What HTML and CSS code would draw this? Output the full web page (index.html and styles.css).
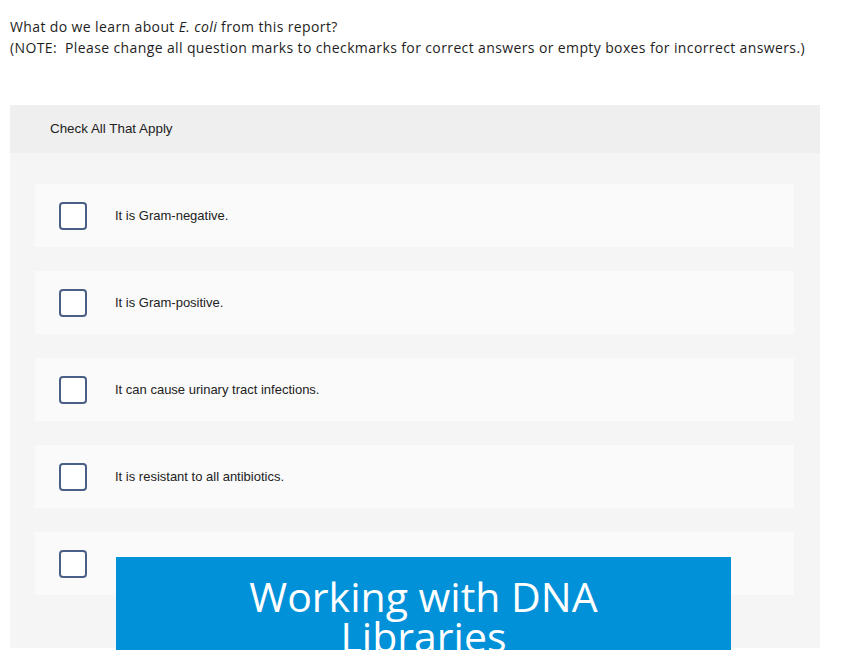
FILE: index.html
```html
<!DOCTYPE html>
<html>
<head>
<meta charset="utf-8">
<link rel="stylesheet" href="styles.css">
</head>
<body>
<div class="prompt">
  <p>What do we learn about <i>E. coli</i> from this report?</p>
  <p>(NOTE:&nbsp; Please change all question marks to checkmarks for correct answers or empty boxes for incorrect answers.)</p>
</div>
<div class="panel">
  <div class="panel-head">Check All That Apply</div>
  <div class="panel-body">
    <div class="option"><span class="box"></span><span class="label">It is Gram-negative.</span></div>
    <div class="option"><span class="box"></span><span class="label">It is Gram-positive.</span></div>
    <div class="option"><span class="box"></span><span class="label">It can cause urinary tract infections.</span></div>
    <div class="option"><span class="box"></span><span class="label">It is resistant to all antibiotics.</span></div>
    <div class="option"><span class="box"></span><span class="label"></span></div>
  </div>
</div>
<div class="banner">Working with DNA<br>Libraries</div>
</body>
</html>
```
FILE: styles.css
```css
html, body {
  margin: 0;
  padding: 0;
  background: #ffffff;
  overflow: hidden;
  height: 660px;
}
body {
  font-family: "Liberation Sans", Arial, sans-serif;
  color: #222;
  position: relative;
}
.prompt {
  padding: 16px 10px 0 10px;
  font-family: "Open Sans", "Liberation Sans", sans-serif;
  font-size: 14px;
  line-height: 21px;
  letter-spacing: 0.38px;
  color: #1e1e1e;
}
.prompt p {
  margin: 0;
  white-space: nowrap;
}
.panel {
  margin: 47px 27px 0 10px;
  background: #f5f5f5;
}
.panel-head {
  background: #efefef;
  height: 48px;
  line-height: 48px;
  padding-left: 40px;
  font-size: 13.4px;
  color: #222;
}
.panel-body {
  padding: 31px 26px 53px 25px;
  display: flex;
  flex-direction: column;
  gap: 24px;
}
.option {
  background: #fafafa;
  height: 63px;
  display: flex;
  align-items: center;
  padding-left: 24px;
}
.box {
  width: 24px;
  height: 24px;
  border: 2px solid #4a5f86;
  border-radius: 4px;
  background: #fff;
  flex: none;
}
.label {
  margin-left: 28px;
  font-size: 13px;
  color: #222;
}
.banner {
  position: absolute;
  left: 116px;
  top: 557px;
  width: 615px;
  height: 93px;
  overflow: hidden;
  background: #0091d9;
  color: #ffffff;
  font-family: "Open Sans", sans-serif;
  font-size: 41px;
  line-height: 40px;
  text-align: center;
  padding-top: 19px;
  box-sizing: border-box;
}
```
